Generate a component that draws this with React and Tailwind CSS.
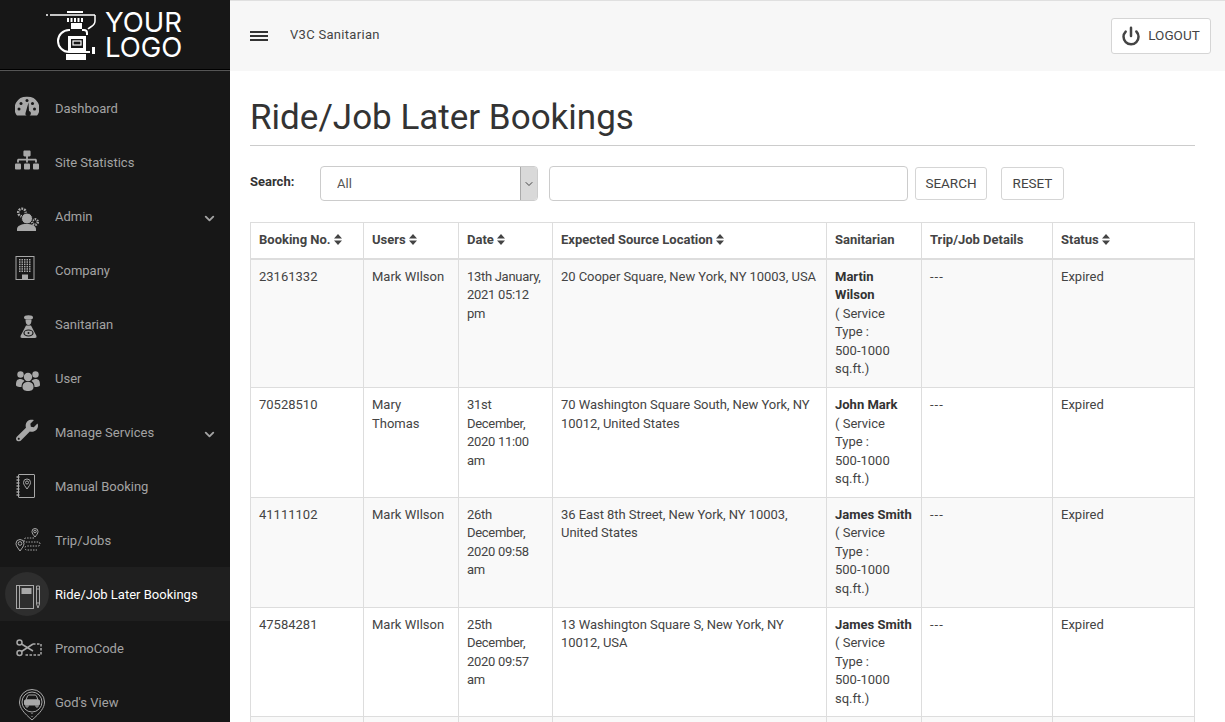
import { ChevronDown, Power } from "lucide-react";
import { FaSitemap, FaWrench } from "react-icons/fa";

const font = "font-['Roboto',sans-serif]";

function Logo() {
  return (
    <svg width="50" height="50" viewBox="0 0 50 50" fill="none" stroke="#fff">
      <rect x="21" y="1" width="16" height="2" fill="#fff" stroke="none" />
      <path d="M0 5h2M4 5h45" strokeWidth="1.5" />
      <path d="M21 10h16" strokeWidth="4" strokeDasharray="2 1.500" />
      <rect x="25" y="13" width="11" height="6" fill="#fff" stroke="none" />
      <path d="M49 5v6c0 5-4 5-7 8" strokeWidth="1.500" />
      <path d="M24 20h-1a11 11 0 0 0 0 22h21" strokeWidth="2" />
      <path d="M36 20h2a3 3 0 0 1 3 3v2" strokeWidth="2" />
      <rect x="23.500" y="27.500" width="15" height="12" strokeWidth="3" />
      <rect x="27" y="31" width="8" height="4" strokeWidth="1.200" />
      <rect x="20" y="44" width="20" height="6" fill="#fff" stroke="none" />
      <rect x="46" y="37" width="3" height="7" fill="#fff" stroke="none" />
    </svg>
  );
}

function GaugeIcon() {
  return (
    <svg width="24" height="20" viewBox="0 0 24 20">
      <path d="M12 0A12 12 0 0 0 1.500 18.500Q2 19 3 19h18q1 0 1.500-.5A12 12 0 0 0 12 0z" fill="currentColor" />
      <g fill="#171717">
        <circle cx="12" cy="4" r="1.500" />
        <circle cx="6" cy="7" r="1.500" />
        <circle cx="4" cy="12.500" r="1.500" />
        <circle cx="19.500" cy="12.500" r="1.500" />
        <circle cx="17.500" cy="7" r="1.500" />
        <path d="M13.500 6L14 14.500a2.700 2.700 0 1 1-3.500 2z" />
      </g>
    </svg>
  );
}

function AdminIcon() {
  return (
    <svg width="24" height="24" viewBox="0 0 24 24" fill="currentColor">
      <circle cx="6" cy="5.500" r="3.800" fill="none" stroke="currentColor" strokeWidth="2.500" strokeDasharray="1.800 1" />
      <circle cx="19" cy="15" r="2.800" fill="none" stroke="currentColor" strokeWidth="2.500" strokeDasharray="1.500 1" />
      <circle cx="11" cy="11.500" r="5.500" stroke="#171717" />
      <path d="M1 24v-2c0-3 4-5 9.500-5S20 19 20 22v2z" />
    </svg>
  );
}

function CompanyIcon() {
  const dots = [];
  for (let r = 0; r < 6; r++) {
    for (let c = 0; c < 5; c++) {
      dots.push(<rect key={`${r}-${c}`} x={4 + c * 2.500} y={3 + r * 2.300} width="1.500" height="1.500" />);
    }
  }
  return (
    <svg width="20" height="24" viewBox="0 0 20 24" fill="currentColor">
      <rect x="1" y=".5" width="18" height="23" fill="none" stroke="currentColor" />
      {dots}
      <rect x="7" y="18.500" width="6" height="5" />
    </svg>
  );
}

function SanitarianIcon() {
  return (
    <svg width="17" height="24" viewBox="0 0 17 24" fill="currentColor">
      <ellipse cx="8.500" cy="2.500" rx="4.500" ry="2.300" />
      <path d="M5.500 5h6c0 3-1 5-3 5s-3-2-3-5z" />
      <path d="M6 10.500h5L16.500 21q.5 2-1.500 2H2Q0 23 .5 21z" />
      <ellipse cx="8.500" cy="18" rx="4.500" ry="3" fill="none" stroke="#171717" strokeWidth="1.200" />
      <circle cx="8.500" cy="18" r="1" fill="#171717" />
    </svg>
  );
}

function UsersIcon() {
  return (
    <svg width="24" height="20" viewBox="0 0 24 20" fill="currentColor">
      <circle cx="4.500" cy="3.500" r="3.200" />
      <circle cx="19.500" cy="3.500" r="3.200" />
      <path d="M0 14c0-4 1-6 4.500-6 2 0 3 1 4 2-2 1-3 3-3 6C2 16 0 15.500 0 14z" />
      <path d="M24 14c0-4-1-6-4.500-6-2 0-3 1-4 2 2 1 3 3 3 6 3.500 0 5.500-.5 5.500-2z" />
      <circle cx="12" cy="6" r="4.200" />
      <path d="M6.500 16c0-3.500 2-5 5.500-5s5.500 1.500 5.500 5c0 3-2.500 4-5.500 4s-5.500-1-5.500-4z" />
    </svg>
  );
}

function ManualIcon() {
  return (
    <svg width="20" height="24" viewBox="0 0 20 24" fill="none" stroke="currentColor" strokeWidth="1">
      <rect x="2.500" y=".5" width="16" height="23" rx=".5" />
      <path d="M.5 3h3M.5 6h3M.5 9h3M.5 12h3M.5 15h3M.5 18h3M.5 21h3" strokeWidth="1.300" />
      <path d="M11 15c-2-3-3.500-4.500-3.500-6.500a3.500 3.500 0 0 1 7 0c0 2-1.500 3.500-3.500 6.500z" />
      <circle cx="11" cy="8.500" r="1.500" />
    </svg>
  );
}

function TripIcon() {
  return (
    <svg width="26" height="26" viewBox="0 0 26 26" fill="none" stroke="currentColor" strokeWidth="1">
      <path d="M5 24c-2-3-4-5-4-7.500a4 4 0 0 1 8 0C9 19 7 21 5 24z" />
      <circle cx="5" cy="16.500" r="1.800" />
      <path d="M20 10c-1.500-2-3-3.500-3-5.500a3 3 0 0 1 6 0c0 2-1.500 3.500-3 5.500z" />
      <circle cx="20" cy="4.500" r="1.300" />
      <path d="M19 11h-8q-2 0-2 2t2 2h12q2 0 2 2t-2 2H12q-2 0-2 2t2 2h10" strokeDasharray="1.500 1.200" />
    </svg>
  );
}

function BookIcon() {
  return (
    <svg width="25" height="24" viewBox="0 0 25 24" fill="none" stroke="currentColor" strokeWidth="1">
      <rect x=".5" y=".5" width="17" height="23" />
      <path d="M3.500 .5v23" />
      <rect x="6" y="3.500" width="9" height="5" fill="currentColor" />
      <path d="M20.500 1h3v18l-1.500 4-1.500-4zM20.500 4h3M20.500 18h3" />
    </svg>
  );
}

function PromoIcon() {
  return (
    <svg width="26" height="18" viewBox="0 0 26 18" fill="none" stroke="currentColor" strokeWidth="1.500">
      <circle cx="3.500" cy="3.500" r="2.500" />
      <circle cx="3.500" cy="14" r="2.500" />
      <path d="M5.500 5L17 12M5.500 12.500L17 5" />
      <path d="M17 5h8v11H8" strokeDasharray="2.500 1.500" />
    </svg>
  );
}

function GodsViewIcon() {
  return (
    <svg width="26" height="32" viewBox="0 0 26 32" fill="none" stroke="currentColor" strokeWidth="1">
      <path d="M13 31C5 24 .5 19 .5 13a12.500 12.500 0 0 1 25 0c0 6-4.500 11-12.500 18z" />
      <circle cx="13" cy="13" r="10" />
      <path d="M7 11l1.500-4q.5-1 1.500-1h6q1 0 1.500 1L19 11z" />
      <rect x="5.500" y="11" width="15" height="5" rx="1" fill="currentColor" />
      <path d="M7 16v2h2v-2M17 16v2h2v-2M13 24v1M13 27v1" />
    </svg>
  );
}

const menu = [
  { label: "Dashboard", icon: <GaugeIcon />, shift: "-translate-y-[1.5px]" },
  { label: "Site Statistics", icon: <FaSitemap size={24} />, shift: "-translate-y-[2px]" },
  { label: "Admin", icon: <AdminIcon />, shift: "translate-x-[1px] translate-y-[3px]", arrow: true },
  { label: "Company", icon: <CompanyIcon />, shift: "-translate-x-[2px] -translate-y-[2px]" },
  { label: "Sanitarian", icon: <SanitarianIcon />, shift: "translate-x-[1px] translate-y-[3px]" },
  { label: "User", icon: <UsersIcon />, shift: "translate-x-[1px] translate-y-[3px]" },
  { label: "Manage Services", icon: <FaWrench size={22} />, shift: "-translate-y-[1.5px]", arrow: true },
  { label: "Manual Booking", icon: <ManualIcon />, shift: "-translate-x-[1px]" },
  { label: "Trip/Jobs", icon: <TripIcon />, shift: "translate-x-[1px]" },
  { label: "Ride/Job Later Bookings", icon: <BookIcon />, shift: "translate-x-[1px] translate-y-[3px]", active: true },
  { label: "PromoCode", icon: <PromoIcon />, shift: "translate-x-[2px]" },
  { label: "God's View", icon: <GodsViewIcon />, shift: "translate-x-[5px] translate-y-[3px]" },
];

const rows = [
  {
    no: "23161332",
    user: "Mark WIlson",
    date: "13th January, 2021 05:12 pm",
    location: "20 Cooper Square, New York, NY 10003, USA",
    name: "Martin Wilson",
  },
  {
    no: "70528510",
    user: "Mary Thomas",
    date: "31st December, 2020 11:00 am",
    location: "70 Washington Square South, New York, NY 10012, United States",
    name: "John Mark",
  },
  {
    no: "41111102",
    user: "Mark WIlson",
    date: "26th December, 2020 09:58 am",
    location: "36 East 8th Street, New York, NY 10003, United States",
    name: "James Smith",
  },
  {
    no: "47584281",
    user: "Mark WIlson",
    date: "25th December, 2020 09:57 am",
    location: "13 Washington Square S, New York, NY 10012, USA",
    name: "James Smith",
  },
];

function Sort() {
  return (
    <svg className="ml-[3px] inline-block align-[-1px]" width="8" height="11" viewBox="0 0 8 11" fill="currentColor">
      <path d="M4 0l4 4.500H0zM4 11l4-4.500H0z" />
    </svg>
  );
}

const columns = [
  { title: "Booking No.", width: "w-[113px]", sort: true },
  { title: "Users", width: "w-[95px]", sort: true },
  { title: "Date", width: "w-[94px]", sort: true },
  { title: "Expected Source Location", width: "w-[274px]", sort: true },
  { title: "Sanitarian", width: "w-[95px]" },
  { title: "Trip/Job Details", width: "w-[131px]" },
  { title: "Status", width: "w-[142px]", sort: true },
];

export default function App() {
  return (
    <div className={`${font} flex h-screen overflow-hidden bg-white text-[13px] text-[#444]`}>
      {/* Sidebar */}
      <aside className="w-[230px] shrink-0 bg-[#171717]">
        <div className="flex h-[69px] items-center gap-[9px] pt-[1px] pl-[46px]">
          <Logo />
          <div className="font-['Inter',sans-serif] text-[27.5px] font-normal text-white">
            <div className="h-[25px] leading-[25px]">YOUR</div>
            <div className="h-[25px] leading-[25px]">LOGO</div>
          </div>
        </div>
        <div className="h-[2px] border-t border-b border-t-black border-b-[#555]" />
        <nav className="pt-[10px]">
          {menu.map((item) => (
            <div
              key={item.label}
              className={`flex h-[54px] items-center pl-[5px] ${item.active ? "bg-[#1f1f1f] text-white" : "text-[#a3a3a3]"}`}
            >
              <span
                className={`flex h-[44px] w-[44px] items-center justify-center rounded-full text-[#a8a8a8] ${
                  item.active ? "bg-[#2e2e2e]" : ""
                }`}
              >
                <span className={`flex ${item.shift}`}>{item.icon}</span>
              </span>
              <span className="ml-[6px] pt-[1px] text-[13px]">{item.label}</span>
              {item.arrow && <ChevronDown size={15} strokeWidth={3} className="mt-[5px] mr-[13px] ml-auto" />}
            </div>
          ))}
        </nav>
      </aside>

      <div className="min-w-0 flex-1">
        {/* Top bar */}
        <header className="flex h-[71px] items-center border-t border-t-[#e0e0e0] bg-[#f7f7f7] pr-[14px] pl-[20px]">
          <div className="mb-[1px] flex w-[18px] flex-col gap-[2px]">
            <span className="h-[2px] bg-[#333]" />
            <span className="h-[2px] bg-[#333]" />
            <span className="h-[2px] bg-[#333]" />
          </div>
          <span className="mb-[2px] ml-[22px] text-[13px] tracking-[.3px] text-[#444]">V3C Sanitarian</span>
          <button className="mb-[1px] ml-auto flex h-[36px] w-[100px] items-center justify-center gap-[7px] rounded-[3px] border border-[#d5d5d5] bg-white pr-[1px] text-[13.5px] text-[#444]">
            <Power size={20} strokeWidth={3} />
            LOGOUT
          </button>
        </header>

        <main className="pr-[30px] pl-[20px]">
          <h1 className="mt-[27px] border-b border-b-[#ccc] pb-[7px] text-[35px] leading-[40px] font-normal text-[#333]">
            Ride/Job Later Bookings
          </h1>

          <div className="mt-[20px] flex h-[36px] items-start">
            <label className="mt-[6px] w-[70px] text-[13px] font-bold text-[#333]">Search:</label>
            <div className="flex h-[35px] w-[218px] overflow-hidden rounded-[4px] border border-[#ccc] bg-white">
              <select className="min-w-0 flex-1 appearance-none bg-transparent pt-[1px] pl-[16px] text-[13px] text-[#555]">
                <option>All</option>
              </select>
              <span className="flex w-[17px] items-center justify-center border-l border-l-[#aaa] bg-[#d9d9d9] text-[#444]">
                <ChevronDown size={12} />
              </span>
            </div>
            <input className="ml-[11px] h-[35px] w-[359px] rounded-[4px] border border-[#ccc]" />
            <button className="mt-[1px] ml-[7px] h-[33px] w-[72px] rounded-[3px] border border-[#d5d5d5] bg-white text-[13.5px] text-[#444]">
              SEARCH
            </button>
            <button className="mt-[1px] ml-[14px] h-[33px] w-[63px] rounded-[3px] border border-[#d5d5d5] bg-white text-[13.5px] text-[#444]">
              RESET
            </button>
          </div>

          <table className="mt-[20px] w-[944px] table-fixed border-collapse text-[13px] leading-[18.57px]">
            <thead>
              <tr>
                {columns.map((col) => (
                  <th
                    key={col.title}
                    className={`${col.width} border border-b-2 border-[#ddd] px-[8px] py-[8px] text-left font-bold text-[#444]`}
                  >
                    {col.title}
                    {col.sort && <Sort />}
                  </th>
                ))}
              </tr>
            </thead>
            <tbody>
              {rows.map((row, i) => (
                <tr key={row.no} className={i % 2 === 0 ? "bg-[#f9f9f9]" : "bg-white"}>
                  <td className="border border-[#ddd] p-[8px] align-top">{row.no}</td>
                  <td className="border border-[#ddd] p-[8px] align-top">{row.user}</td>
                  <td className="border border-[#ddd] p-[8px] align-top tracking-[-0.3px]">{row.date}</td>
                  <td className="border border-[#ddd] p-[8px] align-top tracking-[-0.05px]">{row.location}</td>
                  <td className="border border-[#ddd] p-[8px] align-top">
                    <b className="text-[#333]">{row.name}</b>
                    <br />( Service Type : <span className="whitespace-nowrap">500-1000</span> sq.ft.)
                  </td>
                  <td className="border border-[#ddd] p-[8px] align-top tracking-[1px]">---</td>
                  <td className="border border-[#ddd] p-[8px] align-top">Expired</td>
                </tr>
              ))}
              <tr className="h-[40px] bg-[#f9f9f9]">
                {columns.map((col) => (
                  <td key={col.title} className="border border-[#ddd]" />
                ))}
              </tr>
            </tbody>
          </table>
        </main>
      </div>
    </div>
  );
}
